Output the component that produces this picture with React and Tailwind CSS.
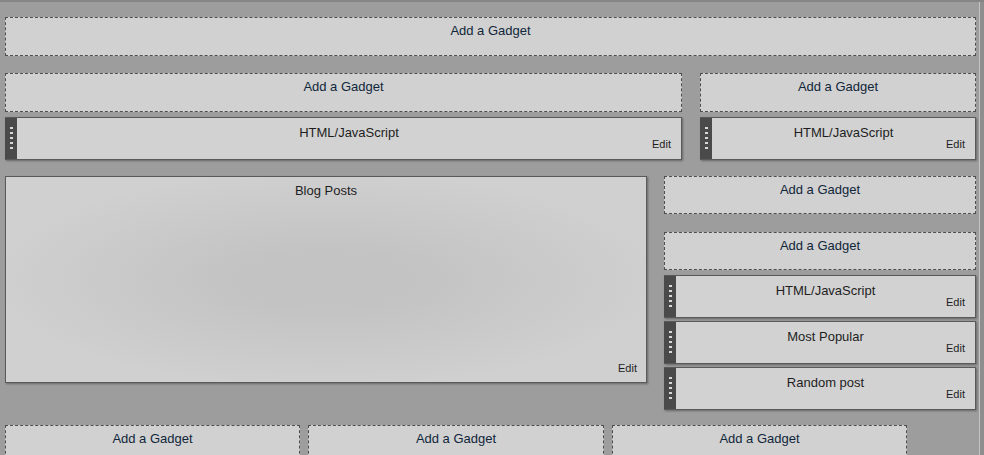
import React from "react";

const font = { fontFamily: '"Liberation Sans", Arial, sans-serif' };

function Gadget({ className = "" }) {
  return (
    <div
      className={`shrink-0 border border-dashed border-[#4e4e4e] bg-[#d1d1d1] flex justify-center pt-[5px] ${className}`}
    >
      <span className="text-[13px] leading-[16px] text-[#10263a]">Add a Gadget</span>
    </div>
  );
}

function Handle() {
  return (
    <div className="w-[12px] shrink-0 bg-[#4a4a4a] flex flex-col items-center pt-[9px] gap-[3px]">
      <span className="w-[3px] h-[2px] bg-[#d8d8d8]" />
      <span className="w-[3px] h-[2px] bg-[#d8d8d8]" />
      <span className="w-[3px] h-[2px] bg-[#d8d8d8]" />
      <span className="w-[3px] h-[2px] bg-[#d8d8d8]" />
      <span className="w-[3px] h-[2px] bg-[#d8d8d8]" />
    </div>
  );
}

function Widget({ title, className = "" }) {
  return (
    <div
      className={`shrink-0 flex h-[43px] border border-[#5a5a5a] border-l-0 bg-[#d2d2d2] shadow-[1px_1px_2px_rgba(0,0,0,0.35)] ${className}`}
    >
      <Handle />
      <div className="flex-1 flex flex-col pt-[7px]">
        <div className="text-center text-[13px] leading-[16px] text-[#1e1e1e]">{title}</div>
        <div className="self-end mr-[10px] text-[11px] leading-[12px] text-[#1e1e1e] -mt-[3px]">Edit</div>
      </div>
    </div>
  );
}

export default function App() {
  return (
    <div
      style={font}
      className="w-[984px] h-[455px] overflow-hidden bg-[#9d9d9d] border-t-2 border-[#858585] flex"
    >
      <div className="w-[979px] pl-[5px] flex flex-col">
        <Gadget className="mt-[15px] w-[971px] h-[39px]" />

        <div className="shrink-0 mt-[17px] flex">
          <div className="w-[677px] flex flex-col">
            <Gadget className="h-[39px]" />
            <Widget title="HTML/JavaScript" className="mt-[5px]" />
          </div>
          <div className="ml-[18px] w-[276px] flex flex-col">
            <Gadget className="h-[39px]" />
            <Widget title="HTML/JavaScript" className="mt-[5px]" />
          </div>
        </div>

        <div className="shrink-0 mt-[16px] flex items-start">
          <div className="w-[642px] h-[207px] border border-[#5a5a5a] bg-[radial-gradient(ellipse_at_center,#c3c3c3_20%,#d0d0d0_75%)] shadow-[1px_1px_2px_rgba(0,0,0,0.35)] flex flex-col pt-[6px] pb-[8px]">
            <div className="text-center text-[13px] leading-[16px] text-[#1e1e1e]">Blog Posts</div>
            <div className="flex-1" />
            <div className="self-end mr-[9px] text-[11px] leading-[12px] text-[#1e1e1e]">Edit</div>
          </div>
          <div className="ml-[17px] w-[312px] flex flex-col">
            <Gadget className="h-[38px]" />
            <Gadget className="h-[38px] mt-[18px]" />
            <Widget title="HTML/JavaScript" className="mt-[5px]" />
            <Widget title="Most Popular" className="mt-[3px]" />
            <Widget title="Random post" className="mt-[3px]" />
          </div>
        </div>

        <div className="shrink-0 mt-[15px] flex gap-[8px]">
          <Gadget className="w-[295px] h-[39px]" />
          <Gadget className="w-[296px] h-[39px]" />
          <Gadget className="w-[295px] h-[39px]" />
        </div>
      </div>
      <div className="w-[5px] border-l border-[#c4c4c4] bg-[#8e8e8e]" />
    </div>
  );
}
